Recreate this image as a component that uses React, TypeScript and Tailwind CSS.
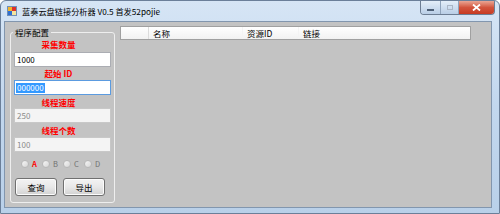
import React from "react";

const FONT = { fontFamily: '"Noto Sans CJK SC", "Noto Sans", sans-serif' };

function Label({ text }: { text: string }) {
  return (
    <div className="h-[12px] leading-[12px] text-[8.5px] font-bold text-[#ff0000] text-center pr-[8px]">
      {text}
    </div>
  );
}

function Radio({ letter, active }: { letter: string; active?: boolean }) {
  return (
    <div className="flex items-center w-[21px]">
      <span className="w-[8px] h-[8px] rounded-full border border-[#b8b8b8] bg-gradient-to-br from-[#f6f6f6] to-[#d6d6d6]" />
      <span
        className={
          "ml-[3px] text-[7.5px] leading-[10px] " +
          (active ? "text-[#ff0000] font-bold" : "text-[#707070]")
        }
      >
        {letter}
      </span>
    </div>
  );
}

function Btn({ text }: { text: string }) {
  return (
    <div className="w-[42px] h-[18px] rounded-[3px] border border-[#707070] bg-gradient-to-b from-[#f3f3f3] via-[#e8e8e8] to-[#d2d2d2] flex items-center justify-center text-[8.5px] text-black shadow-[inset_0_0_0_1px_#fcfcfc]">
      {text}
    </div>
  );
}

export default function App() {
  return (
    <div
      className="w-[500px] h-[214px] flex flex-col bg-gradient-to-b from-[#d6e5f5] via-[#c2d7ee] to-[#b9d0e9] rounded-t-[6px] border border-[#6b7f99] overflow-hidden"
      style={FONT}
    >
      {/* title bar */}
      <div className="h-[20px] flex items-start shrink-0">
        <div className="flex items-center h-[20px] pl-[6px]">
          <svg width="10" height="10" viewBox="0 0 10 10">
            <rect x="0.5" y="0.5" width="9" height="9" fill="#f5f5f5" stroke="#6f8fb8" />
            <rect x="5" y="1" width="4" height="4" fill="#e0302a" />
            <rect x="1" y="5" width="4" height="4" fill="#2f6fd0" />
            <rect x="1" y="1" width="4" height="4" fill="#f3b52c" />
            <rect x="5" y="5" width="4" height="4" fill="#f3e6a0" />
          </svg>
          <span className="ml-[5px] text-[8.2px] leading-[12px] text-black">
            蓝奏云盘链接分析器 V0.5 首发52pojie
          </span>
        </div>
        <div className="ml-auto mr-[4px] flex h-[14px] rounded-b-[4px] border border-t-0 border-[#6c7d93] overflow-hidden">
          <div className="w-[20px] h-full bg-gradient-to-b from-[#e4eef9] to-[#b9cee6] border-r border-[#8fa3bb] flex items-center justify-center">
            <span className="w-[7px] h-[2px] bg-[#4d5f76] mt-[4px]" />
          </div>
          <div className="w-[18px] h-full bg-gradient-to-b from-[#e4eef9] to-[#b9cee6] border-r border-[#8fa3bb] flex items-center justify-center">
            <span className="w-[6px] h-[5px] border border-[#aab6c6]" />
          </div>
          <div className="w-[35px] h-full bg-gradient-to-b from-[#e9a594] via-[#d2543d] to-[#c73a22] flex items-center justify-center">
            <svg width="9" height="7" viewBox="0 0 9 7">
              <path d="M1 0.5 L8 6.5 M8 0.5 L1 6.5" stroke="#ffffff" strokeWidth="1.8" />
            </svg>
          </div>
        </div>
      </div>

      {/* client area */}
      <div className="flex-1 ml-[3px] mr-[7px] mb-[5px] border border-[#8296ae] bg-[#c3c3c3] flex items-start">
        <fieldset className="ml-[5px] mt-[4px] w-[105px] border border-[#eeeeee] rounded-[3px] flex flex-col">
          <legend className="ml-[2px] px-[2px] h-[12px] leading-[12px] text-[8.5px] text-black">
            程序配置
          </legend>
          <Label text="采集数量" />
          <div className="mx-[3px] mt-[2px] h-[15px] bg-white border border-[#abadb3] flex items-center pl-[2px] text-[8px] text-black">
            1000
          </div>
          <Label text="起始 ID" />
          <div className="mx-[3px] mt-[1px] h-[15px] bg-white border border-[#5b9be0] flex items-center pl-[1px] text-[8px]">
            <span className="bg-[#3399ff] text-white leading-[10px] px-[1px]">000000</span>
          </div>
          <div className="mt-[1px]">
            <Label text="线程速度" />
          </div>
          <div className="mx-[3px] h-[15px] bg-[#f4f4f4] border border-[#c8c8c8] flex items-center pl-[2px] text-[8px] text-[#8a8a8a]">
            250
          </div>
          <div className="mt-[1px]">
            <Label text="线程个数" />
          </div>
          <div className="mx-[3px] mt-[1px] h-[15px] bg-[#f4f4f4] border border-[#c8c8c8] flex items-center pl-[2px] text-[8px] text-[#8a8a8a]">
            100
          </div>
          <div className="mt-[6px] h-[12px] pl-[10px] flex items-center">
            <Radio letter="A" active />
            <Radio letter="B" />
            <Radio letter="C" />
            <Radio letter="D" />
          </div>
          <div className="mt-[8px] mb-[6px] pl-[4px] flex gap-[6px]">
            <Btn text="查询" />
            <Btn text="导出" />
          </div>
        </fieldset>

        {/* list header */}
        <div className="ml-[5px] mt-[4px] w-[351px] h-[14px] border border-[#a0a0a0] bg-gradient-to-b from-[#ffffff] to-[#f2f2f2] flex text-[8.5px] leading-[12px] text-black">
          <div className="w-[28px] border-r border-[#dcdcdc]" />
          <div className="w-[94px] pl-[4px] border-r border-[#f4f4f4]">名称</div>
          <div className="w-[56px] pl-[4px] border-r border-[#f4f4f4]">资源ID</div>
          <div className="flex-1 pl-[4px]">链接</div>
        </div>
      </div>
    </div>
  );
}
